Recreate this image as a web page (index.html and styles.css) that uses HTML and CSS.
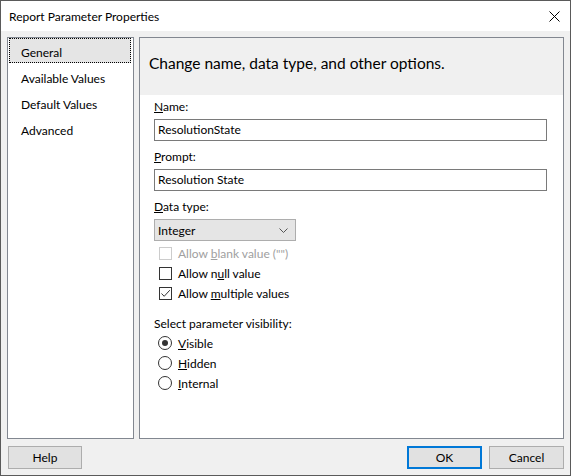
FILE: index.html
```html
<!DOCTYPE html>
<html>
<head>
<meta charset="utf-8">
<link rel="stylesheet" href="styles.css">
</head>
<body>
<div class="window">
  <div class="titlebar">
    <span class="title">Report Parameter Properties</span>
    <svg class="close" width="11" height="11" viewBox="0 0 11 11"><path d="M0.5 0.5 L10.5 10.5 M10.5 0.5 L0.5 10.5" stroke="#000" stroke-width="1" fill="none"/></svg>
  </div>
  <div class="body">
    <div class="main">
      <div class="nav">
        <div class="nav-item selected">General</div>
        <div class="nav-item">Available Values</div>
        <div class="nav-item">Default Values</div>
        <div class="nav-item">Advanced</div>
      </div>
      <div class="panel">
        <div class="panel-header">Change name, data type, and other options.</div>
        <div class="panel-content">
          <div class="label"><u>N</u>ame:</div>
          <div class="textbox">ResolutionState</div>
          <div class="label"><u>P</u>rompt:</div>
          <div class="textbox">Resolution State</div>
          <div class="label"><u>D</u>ata type:</div>
          <div class="select">
            <span>Integer</span>
            <svg width="9" height="5" viewBox="0 0 9 5"><path d="M0.5 0.5 L4.5 4.5 L8.5 0.5" stroke="#555" stroke-width="1" fill="none"/></svg>
          </div>
          <div class="checks">
            <div class="check disabled"><span class="box"></span><span>Allow <u>b</u>lank value ("")</span></div>
            <div class="check"><span class="box"></span><span>Allow n<u>u</u>ll value</span></div>
            <div class="check"><span class="box"><svg width="11" height="11" viewBox="0 0 11 11"><path d="M1.5 5.5 L4.2 8.3 L9.8 2.2" stroke="#333" stroke-width="1" fill="none"/></svg></span><span>Allow <u>m</u>ultiple values</span></div>
          </div>
          <div class="label vis-label">Select parameter visibility:</div>
          <div class="radios">
            <div class="radio"><span class="circle on"></span><span><u>V</u>isible</span></div>
            <div class="radio"><span class="circle"></span><span><u>H</u>idden</span></div>
            <div class="radio"><span class="circle"></span><span><u>I</u>nternal</span></div>
          </div>
        </div>
      </div>
    </div>
    <div class="footer">
      <div class="btn help">Help</div>
      <div class="right-btns">
        <div class="btn default">OK</div>
        <div class="btn">Cancel</div>
      </div>
    </div>
  </div>
</div>
</body>
</html>
```
FILE: styles.css
```css
* { box-sizing: border-box; }
html, body { margin: 0; padding: 0; }
body {
  font-family: "Lato", "Noto Sans", sans-serif;
  font-size: 12px;
  color: #000;
  background: #f0f0f0;
}
.window {
  width: 571px;
  height: 476px;
  border: 1px solid #5a5a5a;
  background: #f0f0f0;
  display: flex;
  flex-direction: column;
}
.titlebar {
  height: 30px;
  background: #fff;
  display: flex;
  align-items: center;
  justify-content: space-between;
  padding: 0 10px 0 8px;
  flex-shrink: 0;
}
.title { font-size: 12px; }
.body {
  flex: 1;
  display: flex;
  flex-direction: column;
  padding: 6px 6px 0 6px;
}
.main {
  display: flex;
  gap: 5px;
  height: 402px;
}
.nav {
  width: 127px;
  border: 1px solid #828790;
  background: #fff;
  padding: 0 2px 0 1px;
}
.nav-item {
  height: 25px;
  margin-bottom: 1px;
  line-height: 23px;
  padding: 2px 0 0 11px;
  border: 1px solid transparent;
}
.nav-item.selected {
  background: #e5e5e5;
  border: 1px dotted #000;
}
.panel {
  flex: 1;
  border: 1px solid #828790;
  background: #fff;
  display: flex;
  flex-direction: column;
}
.panel-header {
  height: 57px;
  background: #f0f0f0;
  font-size: 15.5px;
  padding-left: 9px;
  line-height: 50px;
}
.panel-content {
  padding: 4px 16px 0 14px;
}
.label {
  height: 16px;
  line-height: 16px;
  margin-bottom: 4px;
}
.textbox {
  height: 22px;
  border: 1px solid #7a7a7a;
  line-height: 20px;
  padding-left: 3px;
  margin-bottom: 8px;
}
.select {
  width: 142px;
  height: 22px;
  background: #e5e5e5;
  border: 1px solid #adadad;
  display: flex;
  align-items: center;
  justify-content: space-between;
  padding: 0 7px 0 3px;
}
.checks { padding-top: 2px; }
.check, .radio {
  height: 20px;
  display: flex;
  align-items: center;
  padding-left: 5px;
}
.box {
  width: 13px;
  height: 13px;
  border: 1px solid #333;
  margin-right: 6px;
  display: flex;
  align-items: center;
  justify-content: center;
  background: #fff;
}
.check.disabled { color: #a0a0a0; }
.check.disabled .box { border-color: #cccccc; }
.vis-label { margin-top: 13px; margin-bottom: 1px; }
.radio { padding-left: 4px; }
.circle {
  width: 14px;
  height: 14px;
  border: 1px solid #333;
  border-radius: 50%;
  margin-right: 6px;
  display: flex;
  align-items: center;
  justify-content: center;
}
.circle.on::after {
  content: "";
  width: 6px;
  height: 6px;
  border-radius: 50%;
  background: #333;
}
.footer {
  display: flex;
  justify-content: space-between;
  margin-top: 7px;
  padding-left: 1px;
}
.right-btns { display: flex; gap: 7px; }
.btn {
  width: 75px;
  height: 23px;
  background: #e1e1e1;
  border: 1px solid #adadad;
  display: flex;
  align-items: center;
  justify-content: center;
}
.btn.help { width: 74px; }
.btn.default { border: 2px solid #0078d7; }
```
